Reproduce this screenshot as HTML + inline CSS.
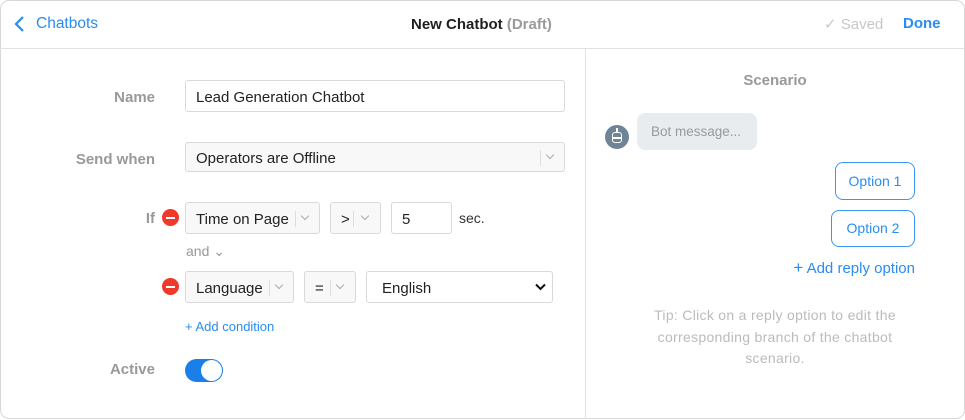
<!DOCTYPE html>
<html><head><style>
*{box-sizing:border-box;margin:0;padding:0}
body{width:965px;height:420px;background:#fff;font-family:"Liberation Sans",sans-serif;position:relative;overflow:hidden}
.a{position:absolute}
.frame{left:0;top:0;width:965px;height:419px;border:1px solid #d8d8d8;border-radius:9px}
.blue{color:#2b8cf0}
.lbl{font-weight:bold;color:#999;font-size:15px;text-align:right;width:155px;left:0}
.box{border:1px solid #d9d9d9;border-radius:3px;font-size:15px;color:#222;line-height:29px;padding-left:10px;padding-top:2px}
.sel{background:#f8f8f8}
.sep{position:absolute;top:7px;width:1px;height:16px;background:#ddd}
.car{position:absolute;top:9px;width:6px;height:6px;border-right:1.3px solid #aaa;border-bottom:1.3px solid #aaa;transform:rotate(45deg)}
.minus{width:17px;height:17px;border-radius:50%;background:#f0382b}
.minus:after{content:"";position:absolute;left:4px;top:7.5px;width:9px;height:2px;background:#fff}
.opt{border:1px solid #3d94f5;border-radius:8px;color:#2b8cf0;font-size:14px;text-align:center}
</style></head><body>
<div class="a frame"></div>
<div class="a" style="left:0;top:48px;width:965px;height:1px;background:#e2e2e2"></div>
<div class="a" style="left:585px;top:49px;width:1px;height:370px;background:#e2e2e2"></div>
<svg class="a" style="left:13px;top:15px" width="14" height="18"><path d="M10 2L3 9l7 7" fill="none" stroke="#2b8cf0" stroke-width="2.2"/></svg>
<div class="a blue" style="left:36px;top:15px;font-size:15.5px">Chatbots</div>
<div class="a" style="left:411px;top:16px;font-size:15px;font-weight:bold;color:#1f1f1f">New Chatbot <span style="color:#9a9a9a">(Draft)</span></div>
<div class="a" style="left:824px;top:15px;font-size:15px;color:#c8c8c8">✓ Saved</div>
<div class="a blue" style="left:903px;top:15px;font-size:15px;font-weight:bold">Done</div>

<div class="a lbl" style="top:89px">Name</div>
<div class="a box" style="left:185px;top:80px;width:380px;height:32px;line-height:30px">Lead Generation Chatbot</div>
<div class="a lbl" style="top:151px">Send when</div>
<div class="a box sel" style="left:185px;top:142px;width:380px;height:30px;line-height:27px">Operators are Offline<span class="sep" style="left:354px"></span><span class="car" style="left:361px"></span></div>

<div class="a lbl" style="top:210px">If</div>
<div class="a minus" style="left:162px;top:209px"></div>
<div class="a box sel" style="left:185px;top:202px;width:135px;height:32px;line-height:29px">Time on Page<span class="sep" style="left:109px;top:8px"></span><span class="car" style="left:116px;top:10px"></span></div>
<div class="a box sel" style="left:330px;top:202px;width:51px;height:32px;line-height:29px">&gt;<span class="sep" style="left:22px;top:8px"></span><span class="car" style="left:31px;top:10px"></span></div>
<div class="a box" style="left:391px;top:202px;width:61px;height:32px;line-height:29px">5</div>
<div class="a" style="left:459px;top:210px;font-size:14px;color:#333">sec.</div>
<div class="a" style="left:186px;top:243px;font-size:14px;color:#999">and ⌄</div>

<div class="a minus" style="left:162px;top:278px"></div>
<div class="a box sel" style="left:185px;top:271px;width:109px;height:32px;line-height:29px">Language<span class="sep" style="left:83px;top:8px"></span><span class="car" style="left:90px;top:10px"></span></div>
<div class="a box sel" style="left:304px;top:271px;width:52px;height:32px;line-height:29px">=<span class="sep" style="left:25px;top:8px"></span><span class="car" style="left:32px;top:10px"></span></div>
<div class="a box" style="left:366px;top:271px;width:187px;height:32px;line-height:29px;padding-left:15px">English
<svg style="position:absolute;right:6px;top:11px" width="11" height="8"><path d="M1 1.5l4.5 4.5 4.5-4.5" fill="none" stroke="#111" stroke-width="2"/></svg></div>
<div class="a blue" style="left:185px;top:319px;font-size:13px">+ Add condition</div>

<div class="a lbl" style="top:361px">Active</div>
<div class="a" style="left:185px;top:359px;width:38px;height:23px;border-radius:12px;background:#1a7fe8"></div>
<div class="a" style="left:201px;top:360px;width:21px;height:21px;border-radius:50%;background:#fff"></div>

<div class="a" style="left:675px;top:72px;width:200px;text-align:center;font-size:15px;font-weight:bold;color:#999">Scenario</div>
<div class="a" style="left:605px;top:125px;width:24px;height:24px;border-radius:50%;background:#6f8597"></div>
<div class="a" style="left:612px;top:132px;width:10px;height:11px;border:1.5px solid #fff;border-radius:3px"></div>
<div class="a" style="left:613px;top:137px;width:8px;height:1.5px;background:#fff"></div>
<div class="a" style="left:616px;top:128px;width:2px;height:4px;background:#fff"></div>
<div class="a" style="left:637px;top:113px;width:120px;height:37px;border-radius:8px;background:#e9ecef;color:#999;font-size:13.5px;line-height:37px;padding-left:14px">Bot message...</div>
<div class="a opt" style="left:835px;top:162px;width:80px;height:38px;line-height:36px">Option 1</div>
<div class="a opt" style="left:831px;top:210px;width:84px;height:37px;line-height:35px">Option 2</div>
<div class="a blue" style="left:745px;top:258px;width:170px;text-align:right;font-size:15px"><span style="font-size:17px">+</span> Add reply option</div>
<div class="a" style="left:645px;top:305px;width:260px;text-align:center;font-size:14px;letter-spacing:0.3px;line-height:21.5px;color:#bbb">Tip: Click on a reply option to edit the corresponding branch of the chatbot scenario.</div>
</body></html>
